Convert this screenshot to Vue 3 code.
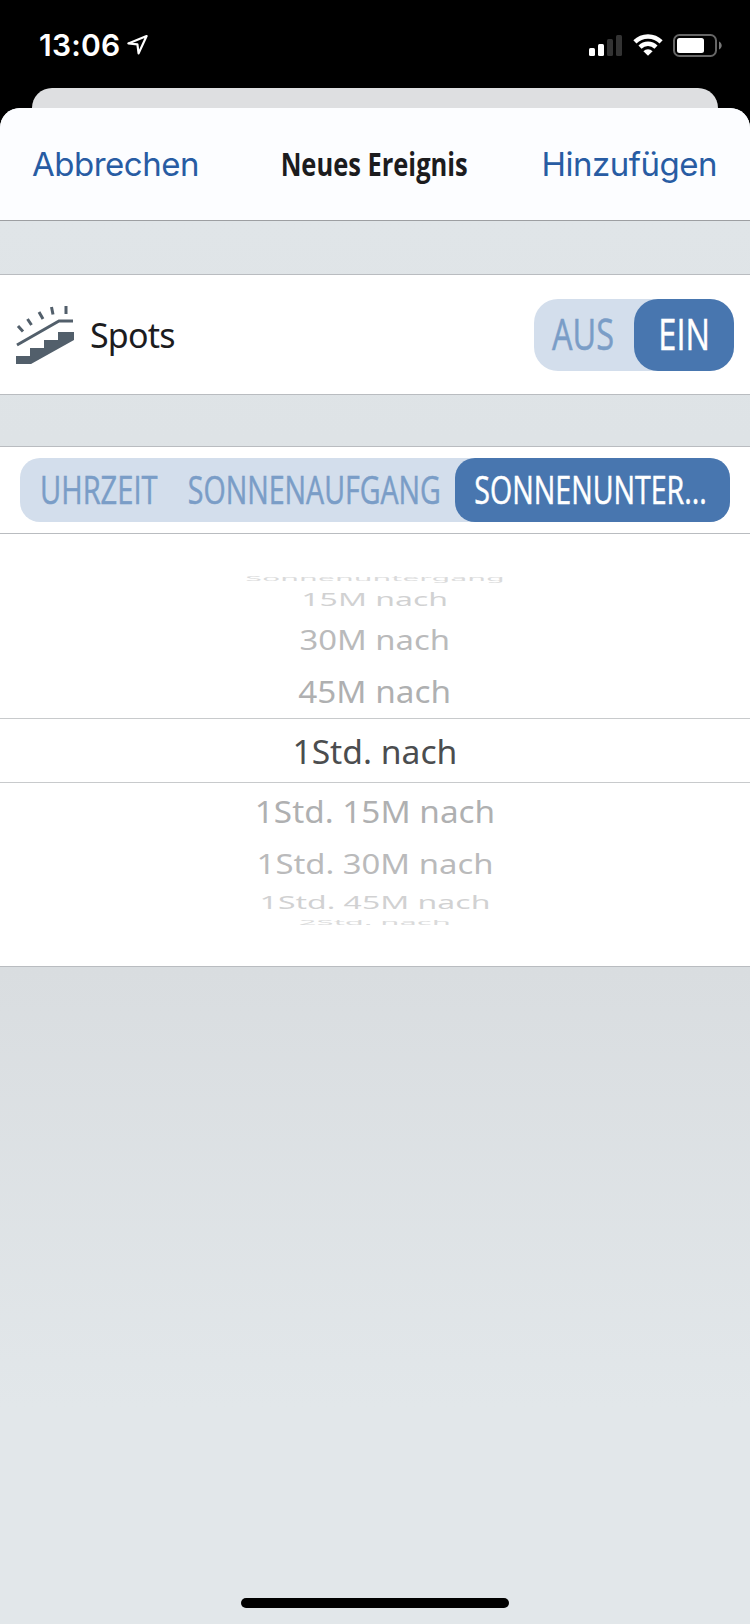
<template>
  <div class="screen">
    <header class="status-bar">
      <div class="status-left">
        <span class="time">13:06</span>
        <svg class="location" width="22" height="22" viewBox="0 0 22 22">
          <path d="M19.6 2 L1.4 9.4 L10.4 10.4 L11.6 19.4 Z" />
        </svg>
      </div>
      <div class="status-right">
        <svg class="signal" width="34" height="22" viewBox="0 0 34 22">
          <rect x="0" y="13" width="6" height="8" rx="1.5" />
          <rect x="9" y="9" width="6" height="12" rx="1.5" />
          <rect class="off" x="18" y="4" width="6" height="17" rx="1.5" />
          <rect class="off" x="27" y="0" width="6" height="21" rx="1.5" />
        </svg>
        <svg class="wifi" width="30" height="22" viewBox="0 0 30 22">
          <path class="arc" d="M1.9 7.9 A18.6 18.6 0 0 1 28.1 7.9" />
          <path class="arc" d="M7 13.1 A11.4 11.4 0 0 1 23 13.1" />
          <path class="dot" d="M10.4 17.2 A6.6 6.6 0 0 1 19.6 17.2 L15 21.8 Z" />
        </svg>
        <svg class="battery" width="50" height="24" viewBox="0 0 50 24">
          <rect class="shell" x="1" y="1" width="42" height="21" rx="5.5" />
          <rect class="level" x="4" y="4" width="27" height="15" rx="2.5" />
          <path class="cap" d="M46 7.5 C49.6 9.4 49.6 13.8 46 15.6 Z" />
        </svg>
      </div>
    </header>

    <div class="back-sheet"></div>

    <main class="sheet">
      <nav class="nav-bar">
        <button class="nav-button">Abbrechen</button>
        <h1 class="title"><span>Neues Ereignis</span></h1>
        <button class="nav-button right">Hinzufügen</button>
      </nav>

      <section class="device-row">
        <svg class="stairs" width="60" height="60" viewBox="0 0 60 60">
          <path class="steps" d="M0 59 V51 H14 V43 H28 V35 H42 V27 H58 V35 L15 59 Z" />
          <path class="rail" d="M1 40 L43 16 H57" />
          <path class="ray" d="M2 21 L7 26.5 M11.5 14 L15.5 20 M23 7 L27 14 M35.5 2 L37 9.5 M50 1 V9" />
        </svg>
        <span class="device-name">Spots</span>
        <div class="toggle">
          <button
            v-for="state in states"
            :key="state"
            class="toggle-option"
            :class="[state.toLowerCase(), { active: state === activeState }]"
            @click="activeState = state"
          >
            <span>{{ state }}</span>
          </button>
        </div>
      </section>

      <section class="mode-row">
        <div class="segments">
          <button
            v-for="mode in modes"
            :key="mode.id"
            class="segment"
            :class="[mode.id, { active: mode.id === activeMode }]"
            @click="activeMode = mode.id"
          >
            <span>{{ mode.label }}</span>
          </button>
        </div>
      </section>

      <section class="picker">
        <div
          v-for="item in offsets"
          :key="item.label"
          class="picker-item"
          :class="{ selected: item.selected }"
          :style="{ height: item.height + 'px', opacity: item.opacity }"
        >
          <span :style="{ transform: `scale(${item.sx}, ${item.sy})` }">{{ item.label }}</span>
        </div>
      </section>
    </main>

    <div class="home-indicator"></div>
  </div>
</template>

<script setup>
import { ref } from 'vue'

const states = ['AUS', 'EIN']
const activeState = ref('EIN')

const modes = [
  { id: 'clock', label: 'UHRZEIT' },
  { id: 'sunrise', label: 'SONNENAUFGANG' },
  { id: 'sunset', label: 'SONNENUNTER...' },
]
const activeMode = ref('sunset')

// rows get flatter and paler towards the edges of the wheel
const offsets = [
  { label: 'Sonnenuntergang', height: 12, sx: 0.92, sy: 0.22, opacity: 0.2 },
  { label: '15M nach', height: 31, sx: 0.97, sy: 0.53, opacity: 0.25 },
  { label: '30M nach', height: 48, sx: 0.995, sy: 0.8, opacity: 0.38 },
  { label: '45M nach', height: 56, sx: 1.01, sy: 0.95, opacity: 0.44 },
  { label: '1Std. nach', height: 65, sx: 1.02, sy: 1, opacity: 1, selected: true },
  { label: '1Std. 15M nach', height: 55, sx: 1.01, sy: 0.95, opacity: 0.44 },
  { label: '1Std. 30M nach', height: 48, sx: 0.995, sy: 0.8, opacity: 0.38 },
  { label: '1Std. 45M nach', height: 30, sx: 0.97, sy: 0.53, opacity: 0.25 },
  { label: '2Std. nach', height: 11, sx: 0.94, sy: 0.2, opacity: 0.2 },
]
</script>

<style>
body {
  margin: 0;
  background: #000;
}
</style>

<style scoped>
.screen {
  position: relative;
  display: flex;
  flex-direction: column;
  width: 750px;
  height: 1624px;
  overflow: hidden;
  background: #000;
  color: #1c1c1e;
  font-family: "Noto Sans", sans-serif;
}
button {
  margin: 0;
  padding: 0;
  border: none;
  background: none;
  cursor: pointer;
}
.status-bar {
  display: flex;
  justify-content: space-between;
  box-sizing: border-box;
  height: 88px;
  padding: 34px 27px 0 39px;
  color: #fff;
}
.status-left,
.status-right {
  display: flex;
  align-items: flex-start;
}
.time {
  font: 600 30px/23px Inter, sans-serif;
  letter-spacing: 0.2px;
}
.location {
  margin: 0 0 0 7px;
}
.location path {
  fill: none;
  stroke: #fff;
  stroke-width: 2.2;
  stroke-linejoin: round;
}
.signal {
  margin: 1px 10px 0 0;
  fill: #fff;
}
.signal .off {
  fill: #333;
}
.wifi {
  margin-right: 10px;
}
.wifi .arc {
  fill: none;
  stroke: #fff;
  stroke-width: 4.4;
}
.wifi .dot {
  fill: #fff;
}
.battery .shell {
  fill: none;
  stroke: #666;
  stroke-width: 2;
}
.battery .level {
  fill: #fff;
}
.battery .cap {
  fill: #777;
}
.back-sheet {
  flex: none;
  height: 40px;
  margin: 0 32px -20px;
  border-radius: 20px 20px 0 0;
  background: #dedfe1;
}
.sheet {
  flex: 1;
  border-radius: 20px 20px 0 0;
  overflow: hidden;
  background: linear-gradient(#e0e5e8 113px, #dee3e6 330px, #d9dde0 860px, #e2e7ea 1300px);
}
.nav-bar {
  display: grid;
  grid-template-columns: 1fr auto 1fr;
  align-items: center;
  box-sizing: border-box;
  height: 113px;
  padding: 0 33px 0 32px;
  border-bottom: 1px solid #9d9fa2;
  background: #fcfdff;
}
.nav-button {
  color: #285ca3;
  font: 400 33px/40px Inter, sans-serif;
  letter-spacing: -0.5px;
  text-align: left;
}
.nav-button.right {
  text-align: right;
}
.title {
  display: flex;
  justify-content: center;
  width: 186px;
  margin: 0;
  font: 700 33px/40px "Open Sans", sans-serif;
  white-space: nowrap;
}
.title span {
  transform: scaleX(0.772);
}
.device-row,
.mode-row,
.picker {
  box-sizing: border-box;
  border-top: 1px solid #b9bcc0;
  border-bottom: 1px solid #b9bcc0;
  background: #fff;
}
.device-row {
  display: flex;
  align-items: center;
  height: 121px;
  margin-top: 53px;
  padding: 0 16px;
}
.stairs .steps {
  fill: #525f6b;
}
.stairs .rail,
.stairs .ray {
  fill: none;
  stroke: #525f6b;
  stroke-width: 3;
}
.device-name {
  margin-left: 14px;
  font-size: 34px;
  line-height: 40px;
  letter-spacing: -0.8px;
}
.toggle {
  display: flex;
  width: 200px;
  height: 72px;
  margin-left: auto;
  border-radius: 24px;
  background: #d3deec;
}
.toggle-option,
.segment {
  display: flex;
  align-items: center;
  justify-content: center;
  padding-bottom: 2px;
  color: #7a9dc7;
  font-family: "Open Sans", sans-serif;
  white-space: nowrap;
  -webkit-text-stroke: 0.5px currentColor;
}
.toggle-option {
  width: 100px;
  border-radius: 24px;
  font-size: 43px;
  line-height: 60px;
}
.toggle-option span {
  transform: scaleX(0.755);
}
.toggle-option.aus span {
  margin-right: 2px;
}
.active {
  background: #4876af;
  color: #fff;
}
.mode-row {
  height: 88px;
  margin-top: 51px;
  padding: 11px 20px;
}
.segments {
  display: flex;
  height: 64px;
  border-radius: 20px;
  background: #d3deec;
}
.segment {
  flex: none;
  border-radius: 20px;
  font-size: 38px;
  line-height: 50px;
}
.segment span {
  transform: scaleX(0.752);
}
.segment.clock {
  width: 158px;
}
.segment.clock span {
  transform: scaleX(0.765);
}
.segment.sunrise {
  width: 273px;
  margin-right: 4px;
}
.segment.sunset {
  width: 275px;
}
.segment.sunset span {
  margin-right: 4px;
}
.picker {
  height: 433px;
  padding-top: 37px;
  border-top: none;
}
.picker-item {
  display: flex;
  align-items: center;
  justify-content: center;
  box-sizing: border-box;
  padding-top: 2px;
  overflow: hidden;
  color: #4b4d4f;
  font-size: 33px;
  line-height: 45px;
  white-space: nowrap;
}
.picker-item.selected {
  border-top: 1px solid #c8cacc;
  border-bottom: 1px solid #c8cacc;
}
.home-indicator {
  position: absolute;
  bottom: 16px;
  left: 241px;
  width: 268px;
  height: 10px;
  border-radius: 5px;
  background: #000;
}
</style>
